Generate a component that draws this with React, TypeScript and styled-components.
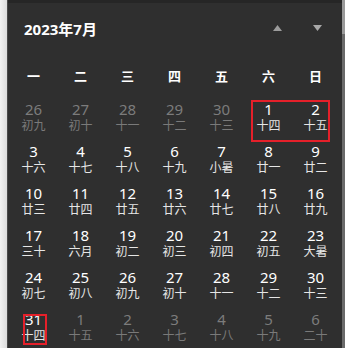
import React from "react";
import styled, { createGlobalStyle } from "styled-components";

const GlobalStyle = createGlobalStyle`
  html, body { margin: 0; padding: 0; background: #2f2f2f; }
  body { font-family: "Noto Sans", "Noto Sans CJK SC", sans-serif; overflow: hidden; }
`;

const Frame = styled.div`
  display: flex;
  width: 345px;
  height: 348px;
  overflow: hidden;
`;

const LeftEdge = styled.div`
  width: 7px;
  flex: none;
  background: linear-gradient(to right, #f2f2f2, #dcdcdc);
  border-right: 1px solid #4a4a4a;
`;

const RightEdge = styled.div`
  width: 3px;
  flex: none;
  background: linear-gradient(to bottom, #9a9a9a 0, #9a9a9a 34px, #6a6a6a 34px);
`;

const Panel = styled.div`
  position: relative;
  flex: 1;
  background: #2f2f2f;
  border-top: 3px solid #262626;
  display: flex;
  flex-direction: column;
`;

const Header = styled.div`
  height: 56px;
  display: flex;
  align-items: center;
  padding-left: 16px;
  padding-right: 16px;
  box-sizing: border-box;
`;

const Title = styled.div`
  flex: 1;
  color: #ffffff;
  font-family: "Noto Sans", "Noto Sans CJK SC", sans-serif;
  font-size: 15px;
  font-weight: 700;
  padding-top: 1px;
`;

const NavGroup = styled.div`
  display: flex;
  gap: 31px;
  align-items: center;
  margin-right: 4px;
`;

const NavButton = styled.div`
  width: 9px;
  height: 9px;
  display: flex;
  align-items: center;
  justify-content: center;
`;

const Grid = styled.div`
  display: grid;
  grid-template-columns: repeat(7, 47px);
  margin-left: 2px;
`;

const WeekRow = styled(Grid)`
  height: 40px;
  margin-top: 6px;
  margin-bottom: 3px;
`;

const WeekDay = styled.div`
  display: flex;
  align-items: center;
  justify-content: center;
  color: #ffffff;
  font-family: "Noto Sans CJK SC", sans-serif;
  font-size: 13px;
  font-weight: 600;
`;

const Cell = styled.div<{ $dim: boolean }>`
  height: 42px;
  display: flex;
  flex-direction: column;
  align-items: center;
  justify-content: center;
  gap: 1px;
  color: ${(p) => (p.$dim ? "#7c7c7c" : "#ffffff")};
`;

const Num = styled.div`
  font-family: "Noto Sans", "Noto Sans CJK SC", sans-serif;
  font-size: 15px;
  line-height: 15px;
`;

const Lunar = styled.div<{ $dim: boolean }>`
  font-family: "Noto Sans CJK SC", sans-serif;
  font-size: 12px;
  line-height: 14px;
  color: ${(p) => (p.$dim ? "#7a7a7a" : "#e6e6e6")};
`;

const Mark = styled.div`
  position: absolute;
  border: 2px solid #e5202a;
  box-sizing: border-box;
  pointer-events: none;
`;

const weekdays = ["一", "二", "三", "四", "五", "六", "日"];

type Day = { n: number; l: string; dim?: boolean };

const days: Day[] = [
  { n: 26, l: "初九", dim: true },
  { n: 27, l: "初十", dim: true },
  { n: 28, l: "十一", dim: true },
  { n: 29, l: "十二", dim: true },
  { n: 30, l: "十三", dim: true },
  { n: 1, l: "十四" },
  { n: 2, l: "十五" },
  { n: 3, l: "十六" },
  { n: 4, l: "十七" },
  { n: 5, l: "十八" },
  { n: 6, l: "十九" },
  { n: 7, l: "小暑" },
  { n: 8, l: "廿一" },
  { n: 9, l: "廿二" },
  { n: 10, l: "廿三" },
  { n: 11, l: "廿四" },
  { n: 12, l: "廿五" },
  { n: 13, l: "廿六" },
  { n: 14, l: "廿七" },
  { n: 15, l: "廿八" },
  { n: 16, l: "廿九" },
  { n: 17, l: "三十" },
  { n: 18, l: "六月" },
  { n: 19, l: "初二" },
  { n: 20, l: "初三" },
  { n: 21, l: "初四" },
  { n: 22, l: "初五" },
  { n: 23, l: "大暑" },
  { n: 24, l: "初七" },
  { n: 25, l: "初八" },
  { n: 26, l: "初九" },
  { n: 27, l: "初十" },
  { n: 28, l: "十一" },
  { n: 29, l: "十二" },
  { n: 30, l: "十三" },
  { n: 31, l: "十四" },
  { n: 1, l: "十五", dim: true },
  { n: 2, l: "十六", dim: true },
  { n: 3, l: "十七", dim: true },
  { n: 4, l: "十八", dim: true },
  { n: 5, l: "十九", dim: true },
  { n: 6, l: "二十", dim: true },
];

const Up = () => (
  <svg width="9" height="6" viewBox="0 0 9 6">
    <polygon points="4.5,0 9,6 0,6" fill="#9c9c9c" />
  </svg>
);

const Down = () => (
  <svg width="9" height="6" viewBox="0 0 9 6">
    <polygon points="0,0 9,0 4.5,6" fill="#a8a8a8" />
  </svg>
);

export default function App() {
  return (
    <>
      <GlobalStyle />
      <Frame>
        <LeftEdge />
        <Panel>
          <Header>
            <Title>2023年7月</Title>
            <NavGroup>
              <NavButton>
                <Up />
              </NavButton>
              <NavButton>
                <Down />
              </NavButton>
            </NavGroup>
          </Header>
          <WeekRow>
            {weekdays.map((w) => (
              <WeekDay key={w}>{w}</WeekDay>
            ))}
          </WeekRow>
          <Grid>
            {days.map((d, i) => (
              <Cell key={i} $dim={!!d.dim}>
                <Num>{d.n}</Num>
                <Lunar $dim={!!d.dim}>{d.l}</Lunar>
              </Cell>
            ))}
          </Grid>
          <Mark style={{ left: 243, top: 97, width: 79, height: 42 }} />
          <Mark style={{ left: 15, top: 311, width: 24, height: 31 }} />
        </Panel>
        <RightEdge />
      </Frame>
    </>
  );
}
